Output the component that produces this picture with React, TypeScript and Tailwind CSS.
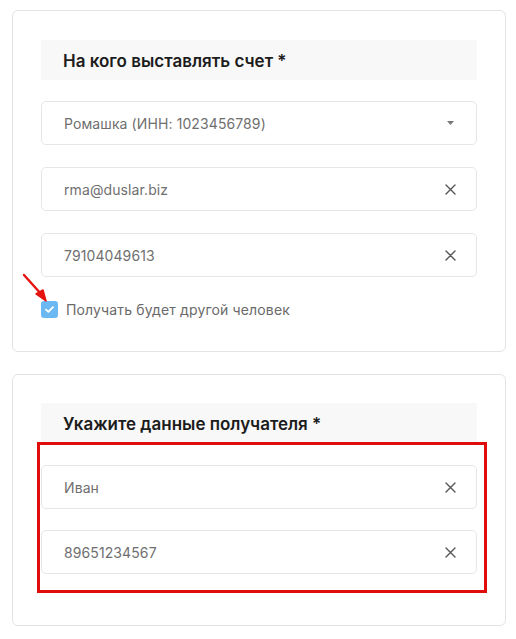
import React from "react";

const font = { fontFamily: "Inter, 'Noto Sans', sans-serif" };

const ClearIcon = () => (
  <svg width="11" height="11" viewBox="0 0 11 11" fill="none">
    <path d="M1 1L10 10M10 1L1 10" stroke="#555" strokeWidth="1.4" strokeLinecap="round" />
  </svg>
);

const Caret = () => (
  <svg width="7" height="4" viewBox="0 0 7 4">
    <path d="M0 0H7L3.5 4Z" fill="#777" />
  </svg>
);

interface FieldProps {
  value: string;
  select?: boolean;
}

const Field = ({ value, select }: FieldProps) => (
  <div className="h-[44px] rounded-[5px] border border-[#e6e6e6] bg-white flex items-center justify-between pl-[22px] pr-[20px]">
    <span className="text-[14px] text-[#6f6f6f] tracking-[0.1px]">{value}</span>
    <span className="w-[11px] flex items-center justify-center">{select ? <Caret /> : <ClearIcon />}</span>
  </div>
);

const Heading = ({ children }: { children: React.ReactNode }) => (
  <div className="h-[40px] bg-[#f8f8f8] flex items-center pl-[22px] pt-[4px]">
    <span className="text-[17px] font-semibold text-[#1c1c1c]">{children}</span>
  </div>
);

export default function App() {
  return (
    <div className="min-h-[639px] w-[516px] bg-white pt-[10px]" style={font}>
      {/* payer card */}
      <div className="relative ml-[12px] w-[494px] rounded-[6px] border border-[#e3e3e3] px-[28px] pt-[29px] pb-[33px]">
        <Heading>На кого выставлять счет *</Heading>
        <div className="mt-[21px] flex flex-col gap-[22px]">
          <Field value="Ромашка (ИНН: 1023456789)" select />
          <Field value="rma@duslar.biz" />
          <Field value="79104049613" />
        </div>
        <label className="mt-[24px] flex items-center gap-[8px]">
          <span className="w-[17px] h-[17px] rounded-[3px] bg-[#6cb8f3] flex items-center justify-center">
            <svg width="9" height="7" viewBox="0 0 9 7" fill="none">
              <path d="M1 3.6L3.4 5.8L8 1.2" stroke="white" strokeWidth="1.8" strokeLinecap="round" strokeLinejoin="round" />
            </svg>
          </span>
          <span className="text-[14px] text-[#6a6a6a] leading-[17px] tracking-[0.15px]">Получать будет другой человек</span>
        </label>
        {/* annotation arrow */}
        <svg className="absolute left-[9px] top-[262px]" width="28" height="30" viewBox="0 0 28 30" fill="none">
          <path d="M2 2L20 22" stroke="#e5120f" strokeWidth="2.4" strokeLinecap="round" />
          <path d="M14 21L24 28L21 17Z" fill="#e5120f" stroke="#e5120f" strokeWidth="1.5" strokeLinejoin="round" />
        </svg>
      </div>

      {/* recipient card */}
      <div className="relative mt-[22px] ml-[12px] w-[494px] rounded-[6px] border border-[#e3e3e3] px-[28px] pt-[28px] pb-[51px]">
        <Heading>Укажите данные получателя *</Heading>
        <div className="mt-[22px] flex flex-col gap-[21px]">
          <Field value="Иван" />
          <Field value="89651234567" />
        </div>
        <div className="absolute left-[24px] top-[67px] w-[450px] h-[151px] border-[3px] border-[#e00d0d]" />
      </div>
    </div>
  );
}
